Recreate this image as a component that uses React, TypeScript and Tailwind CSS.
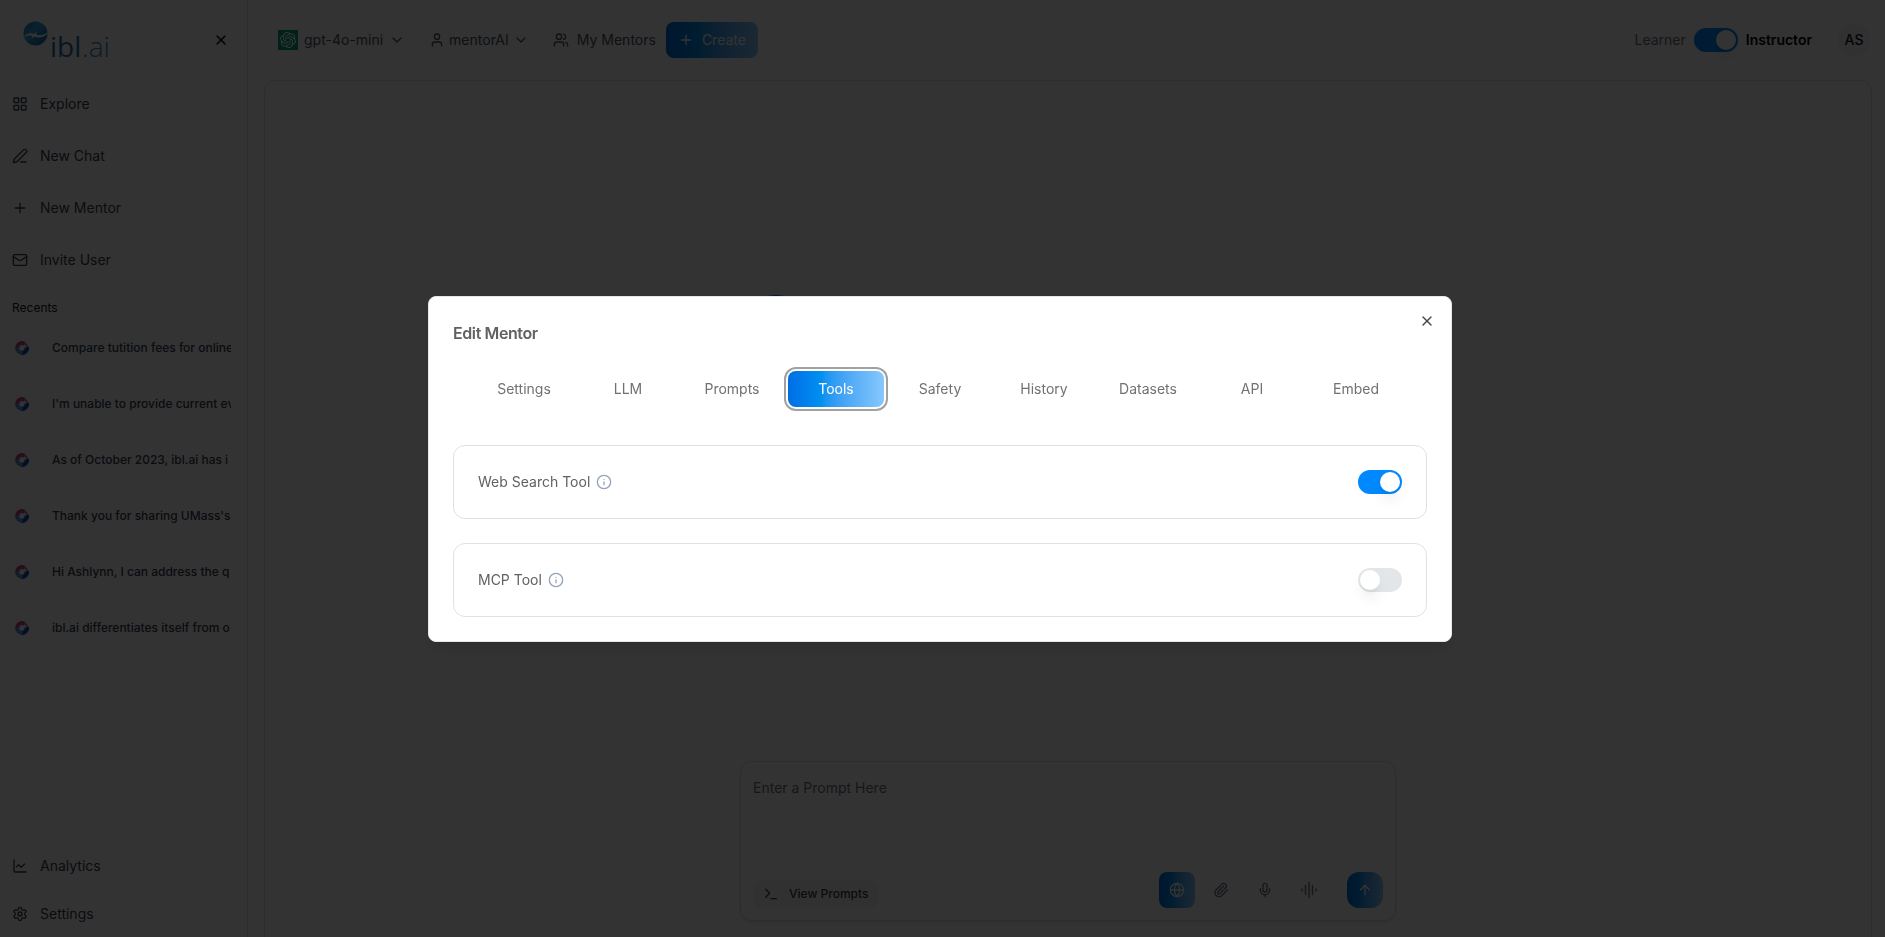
import { useState } from 'react'
import {
  ArrowUp,
  ChartLine,
  ChevronDown,
  Globe,
  Info,
  LayoutGrid,
  Mail,
  Mic,
  Paperclip,
  PenLine,
  Plus,
  Settings,
  Terminal,
  User,
  Users,
  X,
  type LucideIcon,
} from 'lucide-react'
import { SiOpenai } from 'react-icons/si'
import clsx from 'clsx'

type NavItem = { label: string; icon: LucideIcon }
type Tool = { id: string; label: string; enabled: boolean }

const mainNav: NavItem[] = [
  { label: 'Explore', icon: LayoutGrid },
  { label: 'New Chat', icon: PenLine },
  { label: 'New Mentor', icon: Plus },
  { label: 'Invite User', icon: Mail },
]

const footerNav: NavItem[] = [
  { label: 'Analytics', icon: ChartLine },
  { label: 'Settings', icon: Settings },
]

const recents = [
  'Compare tutition fees for online',
  "I'm unable to provide current ev",
  'As of October 2023, ibl.ai has i',
  "Thank you for sharing UMass's",
  'Hi Ashlynn, I can address the q',
  'ibl.ai differentiates itself from o',
]

const tabs = ['Settings', 'LLM', 'Prompts', 'Tools', 'Safety', 'History', 'Datasets', 'API', 'Embed']

const initialTools: Tool[] = [
  { id: 'web-search', label: 'Web Search Tool', enabled: true },
  { id: 'mcp', label: 'MCP Tool', enabled: false },
]

const brandGradient = 'bg-linear-to-r from-[#006ee6] via-[#0090f0] via-35% to-[#86c8fd]'

function Logo() {
  return (
    <svg width="100" height="56" viewBox="0 -8 100 56" role="img" aria-label="ibl.ai">
      <defs>
        <linearGradient id="globe" x1="0" y1="0" x2="1" y2="1">
          <stop offset="0" stopColor="#1673b8" />
          <stop offset="0.4" stopColor="#3aa5dd" />
          <stop offset="1" stopColor="#0b5c9e" />
        </linearGradient>
      </defs>
      <circle cx="13.5" cy="13.5" r="12" fill="url(#globe)" />
      <path
        d="M1 17.500C5 12 9 13 12 14L14.500 11.500L14 14.500C18 16 22 15 27 11.500C23 17.500 18 18.500 12.500 16.500L9.500 19L10.500 16C7 15 4.500 15.500 1 17.500Z"
        fill="#fff"
      />
      <text x="28" y="37" fill="#1f6fb5" fontSize="28" fontFamily="Open Sans, sans-serif" fontWeight="500">
        ibl
      </text>
      <text x="60" y="37" fill="#3d86c0" fontSize="28" fontFamily="Open Sans, sans-serif" fontWeight="300">
        .ai
      </text>
    </svg>
  )
}

function MentorMark() {
  return (
    <svg className="shrink-0" width="14" height="14" viewBox="0 0 14 14" fill="none" aria-hidden="true">
      <path d="M2.200 7A4.800 4.800 0 0 1 9.500 2.800" stroke="#c0488f" strokeWidth="4" />
      <path d="M9 2.200A5 5 0 0 1 12 5.500" stroke="#c77aa8" strokeWidth="2" />
      <path d="M11.800 6A4.800 4.800 0 0 1 6.500 11.800" stroke="#1652b8" strokeWidth="4.400" />
      <path d="M7.500 11.800A4.800 4.800 0 0 1 2.200 7" stroke="#4a9bd8" strokeWidth="4" />
    </svg>
  )
}

function VoiceBars({ className }: { className?: string }) {
  return (
    <svg
      className={className}
      viewBox="0 0 18 18"
      fill="none"
      stroke="currentColor"
      strokeWidth="1.400"
      strokeLinecap="round"
      aria-hidden="true"
    >
      <path d="M2 8v2M5.500 4.500v9M9 1.500v15M12.500 4.500v9M16 8v2" />
    </svg>
  )
}

function Toggle({
  id,
  checked,
  onChange,
}: {
  id: string
  checked: boolean
  onChange: (next: boolean) => void
}) {
  return (
    <input
      id={id}
      type="checkbox"
      role="switch"
      checked={checked}
      onChange={(e) => onChange(e.target.checked)}
      className="flex h-6 w-11 shrink-0 cursor-pointer appearance-none items-center rounded-full bg-[#e2e6e9] p-0.5 transition-colors before:block before:h-5 before:w-5 before:rounded-full before:bg-white before:shadow-lg before:content-[''] checked:justify-end checked:bg-[#0088ff]"
    />
  )
}

function NavList({ items, className }: { items: NavItem[]; className?: string }) {
  return (
    <ul className={clsx('flex flex-col px-3', className)}>
      {items.map(({ label, icon: Icon }) => (
        <li key={label}>
          <a href="#" className="flex h-12 items-center gap-3 text-sm text-gray-700">
            <Icon className="h-4 w-4 shrink-0" />
            {label}
          </a>
        </li>
      ))}
    </ul>
  )
}

function Sidebar() {
  return (
    <aside className="flex w-62 shrink-0 flex-col border-r border-[#dfe1e5]">
      <div className="flex h-20 shrink-0 items-center justify-between pr-[18px] pl-[22px]">
        <a href="#">
          <Logo />
        </a>
        <button type="button" aria-label="Close sidebar">
          <X className="h-4 w-4 text-black" />
        </button>
      </div>

      <nav className="flex min-h-0 flex-1 flex-col">
        <NavList items={mainNav} className="gap-1" />

        <h2 className="mt-3 h-6 shrink-0 px-3 text-xs leading-6 text-gray-900">Recents</h2>
        <ul className="min-h-0 flex-1 overflow-hidden">
          {recents.map((title) => (
            <li key={title}>
              <a
                href="#"
                className="flex h-14 items-center gap-[23px] pr-4 pl-[15px] text-xs font-medium text-gray-700"
              >
                <MentorMark />
                <span className="overflow-hidden whitespace-nowrap">{title}</span>
              </a>
            </li>
          ))}
        </ul>

        <NavList items={footerNav} className="-mb-px" />
      </nav>
    </aside>
  )
}

function Header() {
  const [instructor, setInstructor] = useState(true)

  return (
    <header className="flex h-20 shrink-0 items-center justify-between pr-[15px] pl-[30px] text-sm text-gray-600">
      <div className="flex items-center">
        <button type="button" className="mr-6 flex items-center gap-1.5">
          <span className="flex h-5 w-5 items-center justify-center bg-[#00a67e] text-white">
            <SiOpenai className="h-4 w-4" />
          </span>
          gpt-4o-mini
          <ChevronDown className="h-4 w-4" />
        </button>
        <button type="button" className="mr-6 flex items-center gap-1">
          <User className="h-4 w-4" />
          mentorAI
          <ChevronDown className="h-4 w-4" />
        </button>
        <button type="button" className="mr-2.5 flex items-center gap-2">
          <Users className="h-4 w-4" />
          My Mentors
        </button>
        <button
          type="button"
          className={clsx('flex h-9 items-center gap-2 rounded-lg px-3 text-white', brandGradient)}
        >
          <Plus className="h-4 w-4" />
          Create
        </button>
      </div>

      <div className="flex items-center gap-2">
        <label htmlFor="role" className="text-gray-500">
          Learner
        </label>
        <Toggle id="role" checked={instructor} onChange={setInstructor} />
        <label htmlFor="role" className="font-semibold text-black">
          Instructor
        </label>
        <button
          type="button"
          className="ml-[18px] flex h-8 w-8 items-center justify-center rounded-full bg-gray-100 font-medium text-gray-900"
        >
          AS
        </button>
      </div>
    </header>
  )
}

function PromptBox() {
  const iconButton = 'flex h-9 w-9 items-center justify-center text-gray-500'

  return (
    <form className="flex h-40 flex-col justify-between rounded-xl border border-[#dfe1e5] p-3 shadow-sm">
      <textarea
        aria-label="Prompt"
        placeholder="Enter a Prompt Here"
        rows={3}
        className="w-full resize-none pt-1 text-sm text-gray-700 outline-none placeholder:text-gray-500"
      />
      <div className="flex items-end justify-between">
        <button
          type="button"
          className="flex h-7 items-center gap-2.5 rounded-lg bg-gray-100 px-2.5 text-xs font-medium text-gray-700"
        >
          <Terminal className="h-4 w-4" />
          View Prompts
        </button>
        <div className="flex gap-2">
          <button
            type="button"
            aria-label="Web search"
            className={clsx('flex h-9 w-9 items-center justify-center rounded-lg text-white', brandGradient)}
          >
            <Globe className="h-4 w-4" />
          </button>
          <button type="button" aria-label="Attach file" className={iconButton}>
            <Paperclip className="h-4 w-4" />
          </button>
          <button type="button" aria-label="Dictate" className={iconButton}>
            <Mic className="h-4 w-4" />
          </button>
          <button type="button" aria-label="Voice call" className={iconButton}>
            <VoiceBars className="h-[18px] w-[18px]" />
          </button>
          <button
            type="submit"
            aria-label="Send"
            className={clsx('ml-3 flex h-9 w-9 items-center justify-center rounded-xl text-white', brandGradient)}
          >
            <ArrowUp className="h-4 w-4" />
          </button>
        </div>
      </div>
    </form>
  )
}

function EditMentorDialog() {
  const [activeTab, setActiveTab] = useState('Tools')
  const [tools, setTools] = useState(initialTools)

  function setEnabled(id: string, enabled: boolean) {
    setTools((prev) => prev.map((t) => (t.id === id ? { ...t, enabled } : t)))
  }

  return (
    <div className="fixed inset-0 flex items-center justify-center bg-black/80 pr-[5px]">
      <div
        role="dialog"
        aria-modal="true"
        aria-labelledby="dialog-title"
        className="relative w-full max-w-5xl rounded-lg border border-gray-200 bg-white p-6 shadow-lg"
      >
        <h1 id="dialog-title" className="text-base font-semibold tracking-tight text-[#616161]">
          Edit Mentor
        </h1>
        <button type="button" aria-label="Close" className="absolute top-4 right-4">
          <X className="h-4 w-4 text-[#444444]" />
        </button>

        <div role="tablist" className="mt-6 mb-9 flex justify-center gap-2 p-0.5">
          {tabs.map((tab) => (
            <button
              key={tab}
              type="button"
              role="tab"
              aria-selected={tab === activeTab}
              onClick={() => setActiveTab(tab)}
              className={clsx(
                'h-9 w-24 rounded-lg text-sm',
                tab === activeTab
                  ? ['text-white ring-2 ring-[#a1a1a1] ring-offset-2', brandGradient]
                  : 'text-[#717171]',
              )}
            >
              {tab}
            </button>
          ))}
        </div>

        <div className="flex flex-col gap-6">
          {tools.map((tool) => (
            <div
              key={tool.id}
              className="flex items-center justify-between rounded-xl border border-[#e0e1e3] p-6"
            >
              <div className="flex items-center gap-1.5">
                <label htmlFor={tool.id} className="text-sm text-[#616161]">
                  {tool.label}
                </label>
                <Info className="h-4 w-4 text-[#94a3b8]" />
              </div>
              <Toggle
                id={tool.id}
                checked={tool.enabled}
                onChange={(next) => setEnabled(tool.id, next)}
              />
            </div>
          ))}
        </div>
      </div>
    </div>
  )
}

export default function App() {
  return (
    <div className="flex h-screen overflow-hidden bg-white font-['Inter',sans-serif]">
      <Sidebar />
      <div className="flex min-w-0 flex-1 flex-col">
        <Header />
        <main className="mr-[13px] ml-4 flex min-h-0 flex-1 flex-col items-center rounded-t-xl border border-b-0 border-[#dfe1e5] pb-4">
          <div className="flex w-full max-w-[656px] flex-1 flex-col justify-between pt-[214px]">
            <div className="h-[72px] w-[72px] rounded-full bg-[#0a6fc2]" />
            <PromptBox />
          </div>
        </main>
      </div>
      <EditMentorDialog />
    </div>
  )
}
